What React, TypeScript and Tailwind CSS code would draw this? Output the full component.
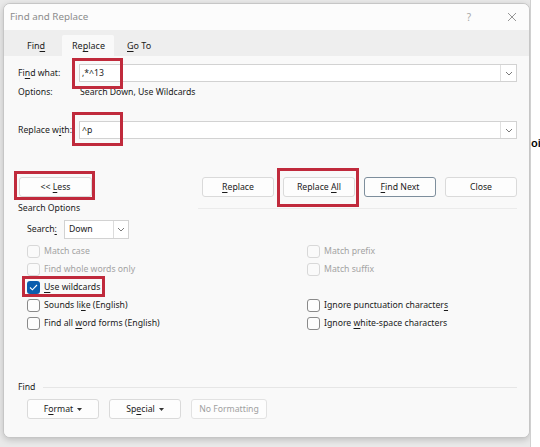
import React from "react";

const U = ({ children }: { children: React.ReactNode }) => (
  <span className="underline underline-offset-[1.5px] decoration-[1px]">{children}</span>
);

const Chevron = () => (
  <svg width="8" height="5" viewBox="0 0 8 5" fill="none">
    <path d="M1 1 L4 4 L7 1" stroke="#6b6b6b" strokeWidth="0.9" />
  </svg>
);

const Tri = () => (
  <svg width="5" height="3" viewBox="0 0 5 3" className="ml-[4px] inline-block align-middle">
    <path d="M0 0 L5 0 L2.5 3 Z" fill="#333" />
  </svg>
);

function Checkbox({
  label,
  state = "normal",
}: {
  label: React.ReactNode;
  state?: "normal" | "disabled" | "checked";
}) {
  return (
    <div className="flex items-center h-[18px]">
      {state === "checked" ? (
        <div className="w-[13px] h-[13px] rounded-[3px] bg-[#0b5cad] flex items-center justify-center shrink-0">
          <svg width="9" height="7" viewBox="0 0 9 7" fill="none">
            <path d="M1 3.5 L3.4 5.8 L8 1" stroke="white" strokeWidth="1.1" />
          </svg>
        </div>
      ) : state === "disabled" ? (
        <div className="w-[13px] h-[13px] rounded-[3px] border border-[#d8d8d8] bg-[#fafafa] shrink-0" />
      ) : (
        <div className="w-[13px] h-[13px] rounded-[3px] border border-[#8a8a8a] bg-[#fdfdfd] shrink-0" />
      )}
      <span
        className={
          "ml-[4px] whitespace-nowrap " +
          (state === "disabled" ? "text-[#a3a3a3]" : "text-[#1b1b1b]")
        }
      >
        {label}
      </span>
    </div>
  );
}

function Btn({
  children,
  w = "w-[72px]",
  variant = "normal",
}: {
  children: React.ReactNode;
  w?: string;
  variant?: "normal" | "default" | "disabled";
}) {
  const cls =
    variant === "default"
      ? "border-[#7d8e9c]"
      : variant === "disabled"
      ? "border-[#e2e2e2] text-[#a0a0a0]"
      : "border-[#dadada]";
  return (
    <div
      className={
        w +
        " h-[20px] rounded-[3px] border bg-[#fdfdfd] flex items-center justify-center shrink-0 " +
        cls
      }
    >
      <span className="whitespace-pre">{children}</span>
    </div>
  );
}

const Red = ({ cls }: { cls: string }) => (
  <div className={"absolute border-[3px] border-[#c02a3c] pointer-events-none " + cls} />
);

export default function App() {
  return (
    <div className="w-[540px] h-[447px] bg-[#e9e9e9] flex relative overflow-hidden font-['Noto_Sans',_sans-serif] text-[8.7px] text-[#1b1b1b] leading-none">
      <div className="pl-[3px] pt-[3px] shrink-0">
        <div className="w-[527px] h-[435px] border border-[#c6c6c6] rounded-[7px] overflow-hidden flex flex-col bg-[#f9f9f9] shadow-[0_2px_6px_rgba(0,0,0,0.18)]">
          {/* Title bar */}
          <div className="h-[26px] bg-[#fcfcfc] flex items-center pl-[6px] shrink-0">
            <span className="text-[9.8px] text-[#8c8c8c]">Find and Replace</span>
            <span className="ml-auto text-[10px] text-[#a8a8a8] mr-[36px]">?</span>
            <svg width="10" height="10" viewBox="0 0 10 10" className="mr-[12px]">
              <path d="M1 1 L9 9 M9 1 L1 9" stroke="#8a8a8a" strokeWidth="0.9" />
            </svg>
          </div>
          {/* Tabs */}
          <div className="h-[26px] bg-[#eeeeee] flex items-end pl-[13px] shrink-0 text-[9px]">
            <div className="w-[45px] h-[21px] flex items-center pl-[10px]">
              <span>
                Fin<U>d</U>
              </span>
            </div>
            <div className="w-[52px] h-[21px] flex items-center pl-[10px] bg-[#f9f9f9] rounded-t-[2px]">
              <span>
                Re<U>p</U>lace
              </span>
            </div>
            <div className="w-[50px] h-[21px] flex items-center pl-[13px]">
              <span className="whitespace-pre">
                <U>G</U>o To
              </span>
            </div>
          </div>
          {/* Content */}
          <div className="flex-1 flex flex-col bg-[#f9f9f9] pr-[12px]">
            {/* Find what */}
            <div className="mt-[8px] h-[18px] flex items-center">
              <div className="w-[75px] pl-[14px] shrink-0 whitespace-pre">
                Fi<U>n</U>d what:
              </div>
              <div className="w-[438px] h-[18px] border border-[#d2d2d2] bg-white flex items-center pl-[2px]">
                <span>,*^13</span>
                <div className="ml-auto w-[16px] h-[16px] border-l border-[#e0e0e0] flex items-center justify-center">
                  <Chevron />
                </div>
              </div>
            </div>
            {/* Options */}
            <div className="mt-[2px] h-[16px] flex items-center">
              <div className="w-[76px] pl-[14px] shrink-0">Options:</div>
              <span className="whitespace-nowrap">Search Down, Use Wildcards</span>
            </div>
            {/* Replace with */}
            <div className="mt-[21px] h-[18px] flex items-center">
              <div className="w-[75px] pl-[14px] shrink-0 whitespace-pre">
                Replace w<U>i</U>th:
              </div>
              <div className="w-[438px] h-[18px] border border-[#d2d2d2] bg-white flex items-center pl-[2px]">
                <span>^p</span>
                <div className="ml-auto w-[16px] h-[16px] border-l border-[#e0e0e0] flex items-center justify-center">
                  <Chevron />
                </div>
              </div>
            </div>
            {/* Buttons */}
            <div className="mt-[38px] h-[20px] flex items-center">
              <div className="ml-[15px]">
                <Btn w="w-[73px]">
                  &lt;&lt; <U>L</U>ess
                </Btn>
              </div>
              <div className="ml-auto flex gap-[9px]">
                <Btn>
                  <U>R</U>eplace
                </Btn>
                <Btn>
                  Replace <U>A</U>ll
                </Btn>
                <Btn variant="default">
                  <U>F</U>ind Next
                </Btn>
                <Btn>Close</Btn>
              </div>
            </div>
            {/* Search Options */}
            <div className="mt-[3px] h-[16px] flex items-center">
              <span className="pl-[14px] shrink-0 whitespace-nowrap">Search Options</span>
              <div className="flex-1 ml-[118px] h-px bg-[#ebebeb]" />
            </div>
            {/* Search select */}
            <div className="mt-[4px] h-[19px] flex items-center">
              <div className="w-[60px] pl-[23px] shrink-0">
                Search<U>:</U>
              </div>
              <div className="w-[65px] h-[19px] border border-[#d2d2d2] bg-white flex items-center pl-[4px]">
                <span>Down</span>
                <div className="ml-auto w-[15px] h-[17px] border-l border-[#dcdcdc] flex items-center justify-center">
                  <Chevron />
                </div>
              </div>
            </div>
            {/* Checkboxes */}
            <div className="mt-[3px] flex pl-[23px]">
              <div className="w-[280px] flex flex-col">
                <Checkbox label="Match case" state="disabled" />
                <Checkbox label="Find whole words only" state="disabled" />
                <Checkbox
                  label={
                    <>
                      <U>U</U>se wildcards
                    </>
                  }
                  state="checked"
                />
                <Checkbox
                  label={
                    <>
                      Sounds li<U>k</U>e (English)
                    </>
                  }
                />
                <Checkbox
                  label={
                    <>
                      Find all <U>w</U>ord forms (English)
                    </>
                  }
                />
              </div>
              <div className="flex flex-col">
                <Checkbox label="Match prefix" state="disabled" />
                <Checkbox label="Match suffix" state="disabled" />
                <div className="h-[18px]" />
                <Checkbox
                  label={
                    <>
                      Ignore punctuation character<U>s</U>
                    </>
                  }
                />
                <Checkbox
                  label={
                    <>
                      Ignore <U>w</U>hite-space characters
                    </>
                  }
                />
              </div>
            </div>
            {/* Find section */}
            <div className="mt-[47px] h-[16px] flex items-center">
              <span className="pl-[14px] shrink-0">Find</span>
              <div className="flex-1 ml-[8px] h-px bg-[#e6e6e6]" />
            </div>
            <div className="mt-[4px] h-[20px] flex items-center pl-[23px] gap-[10px]">
              <Btn>
                F<U>o</U>rmat
                <Tri />
              </Btn>
              <Btn>
                Sp<U>e</U>cial
                <Tri />
              </Btn>
              <Btn w="w-[76px]" variant="disabled">
                No Formatting
              </Btn>
            </div>
          </div>
        </div>
      </div>
      <div className="flex-1 bg-white border-l border-[#d0d0d0] pt-[137px] overflow-hidden">
        <span className="text-[11px] font-semibold text-black whitespace-nowrap">oi</span>
      </div>

      <Red cls="left-[72px] top-[58px] w-[51px] h-[31px]" />
      <Red cls="left-[72px] top-[112px] w-[51px] h-[34px]" />
      <Red cls="left-[14px] top-[171px] w-[81px] h-[29px]" />
      <Red cls="left-[277px] top-[168px] w-[82px] h-[39px]" />
      <Red cls="left-[22px] top-[276px] w-[83px] h-[21px]" />
    </div>
  );
}
